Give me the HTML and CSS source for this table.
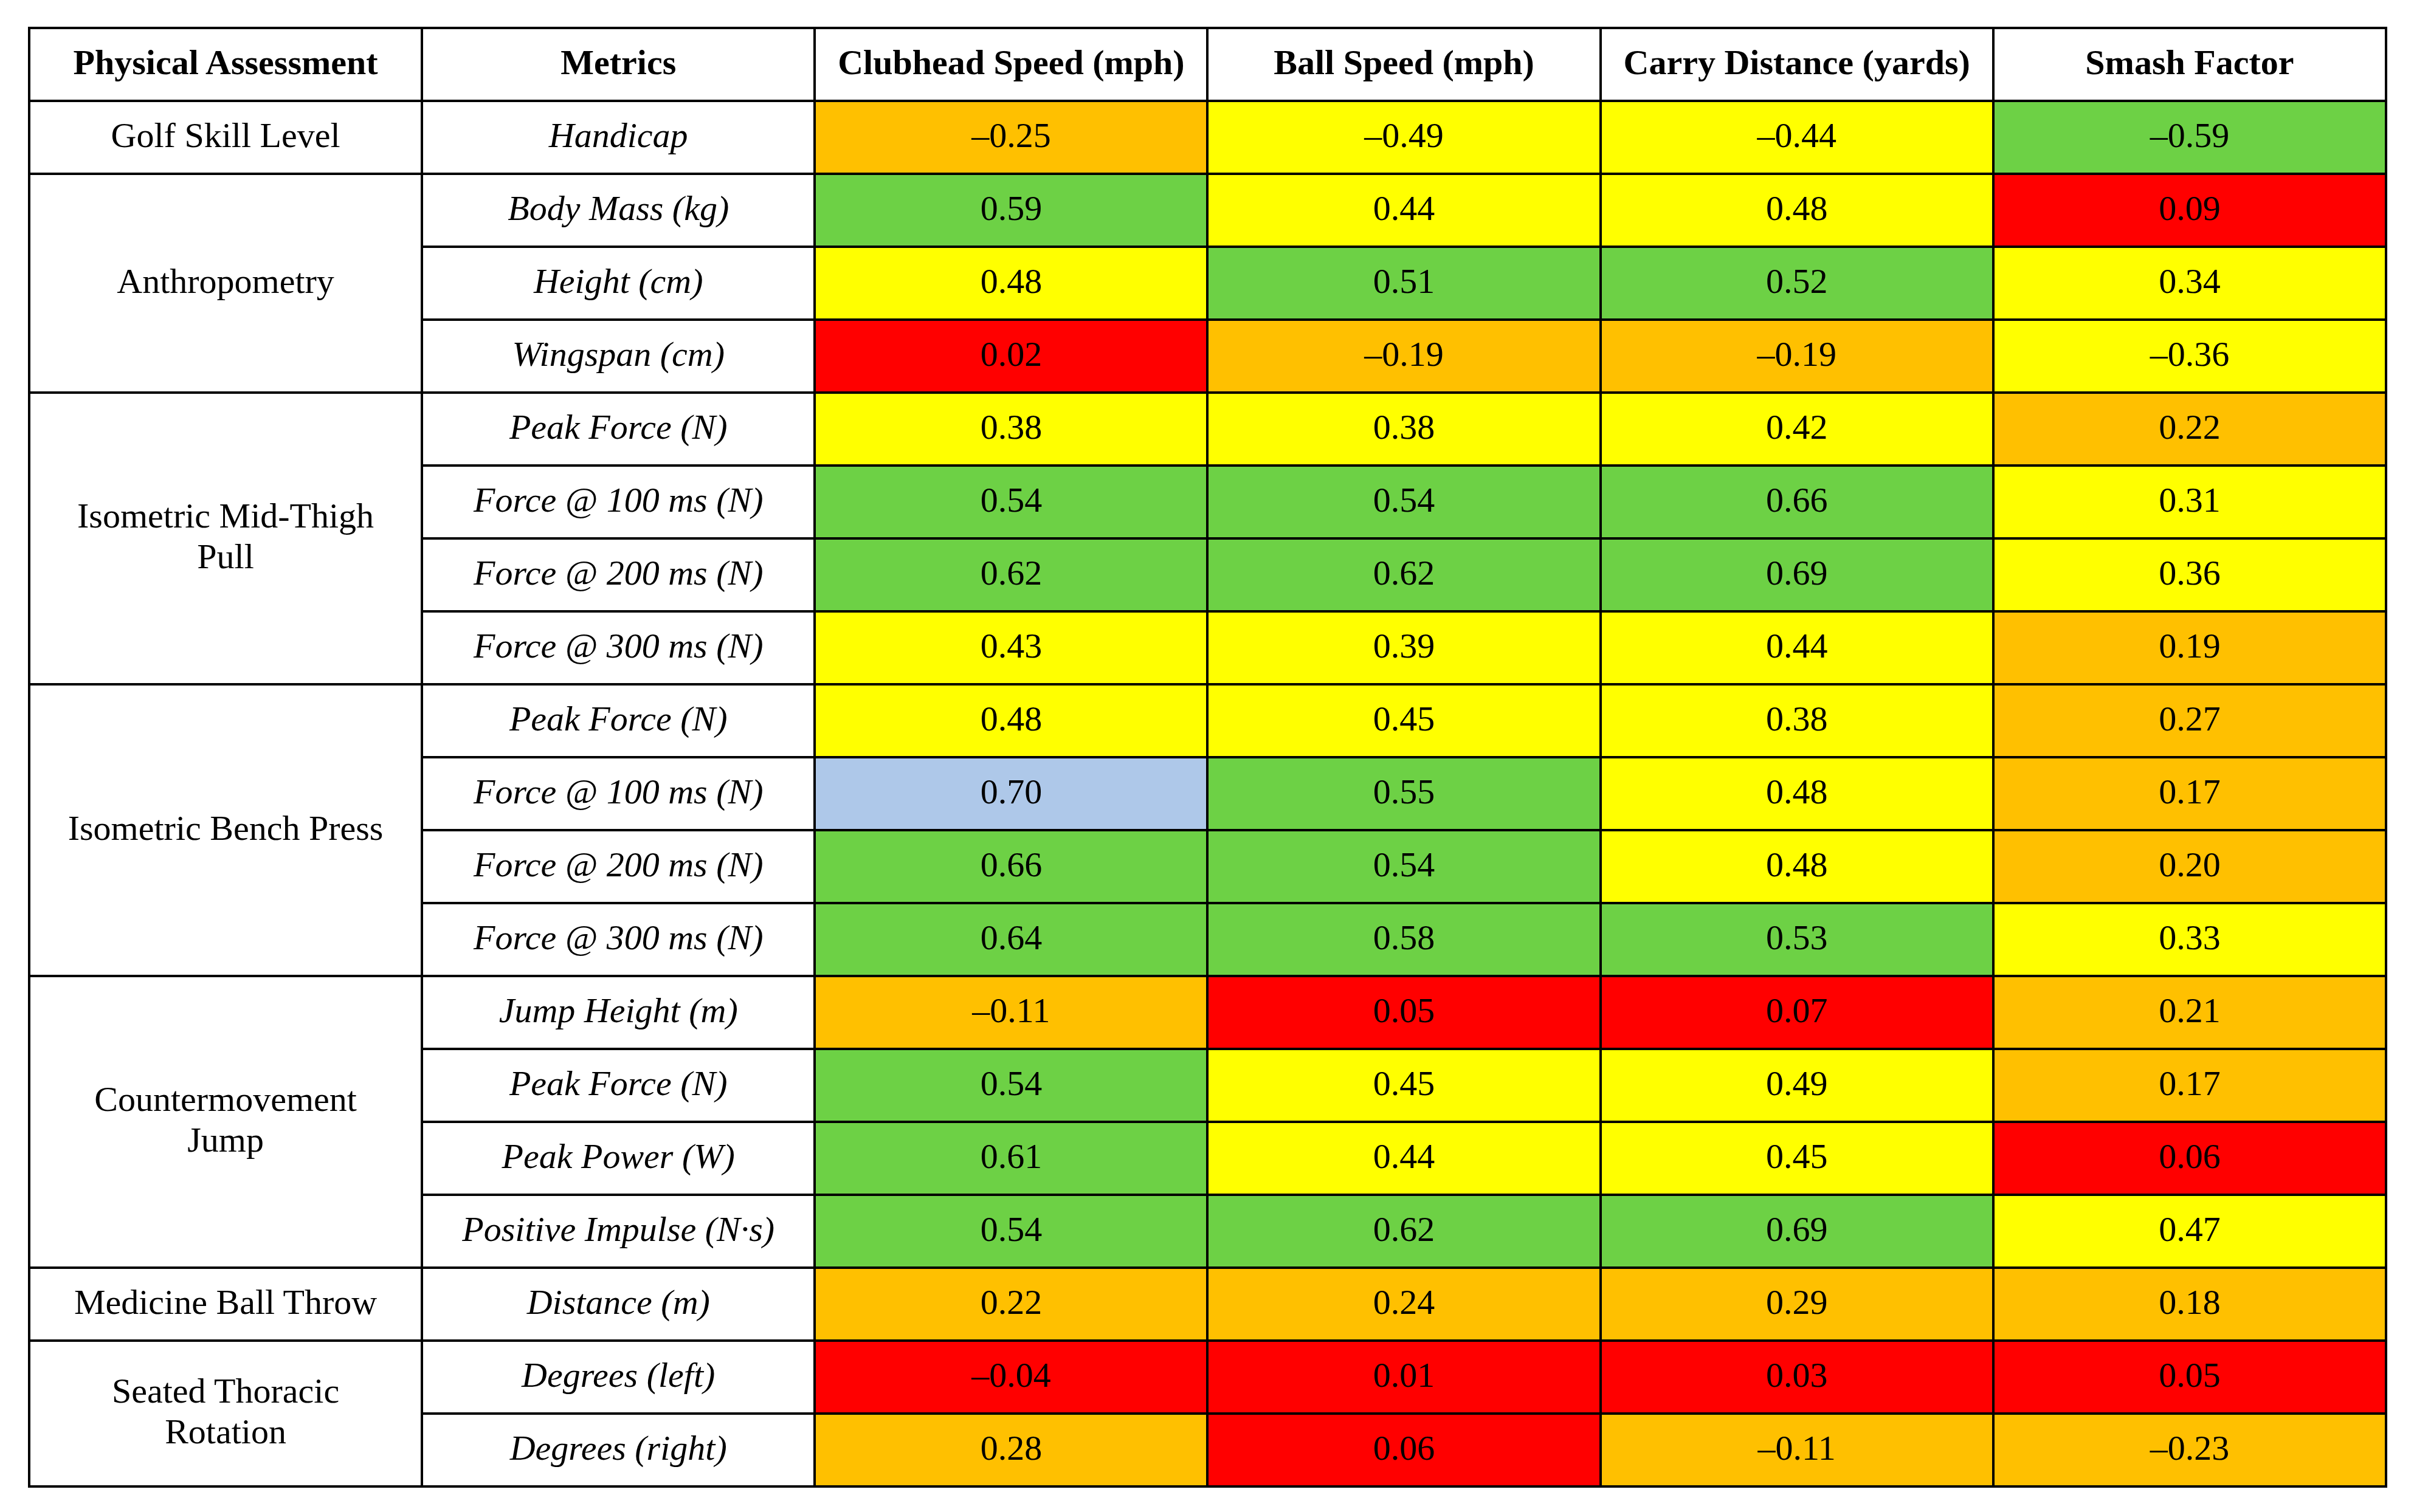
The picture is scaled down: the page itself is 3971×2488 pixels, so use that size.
FILE: index.html
```html
<!DOCTYPE html>
<html lang="en">
<head>
<meta charset="utf-8">
<title>Correlation table</title>
<link rel="stylesheet" href="styles.css">
</head>
<body>
<table class="grid">
  <thead>
    <tr>
      <th>Physical Assessment</th>
      <th>Metrics</th>
      <th>Clubhead Speed (mph)</th>
      <th>Ball Speed (mph)</th>
      <th>Carry Distance (yards)</th>
      <th>Smash Factor</th>
    </tr>
  </thead>
  <tbody>
    <tr>
      <td class="grp">Golf Skill Level</td>
      <td class="met">Handicap</td>
      <td class="o">–0.25</td><td class="y">–0.49</td><td class="y">–0.44</td><td class="g">–0.59</td>
    </tr>
    <tr>
      <td class="grp" rowspan="3">Anthropometry</td>
      <td class="met">Body Mass (kg)</td>
      <td class="g">0.59</td><td class="y">0.44</td><td class="y">0.48</td><td class="r">0.09</td>
    </tr>
    <tr>
      <td class="met">Height (cm)</td>
      <td class="y">0.48</td><td class="g">0.51</td><td class="g">0.52</td><td class="y">0.34</td>
    </tr>
    <tr>
      <td class="met">Wingspan (cm)</td>
      <td class="r">0.02</td><td class="o">–0.19</td><td class="o">–0.19</td><td class="y">–0.36</td>
    </tr>
    <tr>
      <td class="grp" rowspan="4">Isometric Mid-Thigh<br>Pull</td>
      <td class="met">Peak Force (N)</td>
      <td class="y">0.38</td><td class="y">0.38</td><td class="y">0.42</td><td class="o">0.22</td>
    </tr>
    <tr>
      <td class="met">Force @ 100 ms (N)</td>
      <td class="g">0.54</td><td class="g">0.54</td><td class="g">0.66</td><td class="y">0.31</td>
    </tr>
    <tr>
      <td class="met">Force @ 200 ms (N)</td>
      <td class="g">0.62</td><td class="g">0.62</td><td class="g">0.69</td><td class="y">0.36</td>
    </tr>
    <tr>
      <td class="met">Force @ 300 ms (N)</td>
      <td class="y">0.43</td><td class="y">0.39</td><td class="y">0.44</td><td class="o">0.19</td>
    </tr>
    <tr>
      <td class="grp" rowspan="4">Isometric Bench Press</td>
      <td class="met">Peak Force (N)</td>
      <td class="y">0.48</td><td class="y">0.45</td><td class="y">0.38</td><td class="o">0.27</td>
    </tr>
    <tr>
      <td class="met">Force @ 100 ms (N)</td>
      <td class="b">0.70</td><td class="g">0.55</td><td class="y">0.48</td><td class="o">0.17</td>
    </tr>
    <tr>
      <td class="met">Force @ 200 ms (N)</td>
      <td class="g">0.66</td><td class="g">0.54</td><td class="y">0.48</td><td class="o">0.20</td>
    </tr>
    <tr>
      <td class="met">Force @ 300 ms (N)</td>
      <td class="g">0.64</td><td class="g">0.58</td><td class="g">0.53</td><td class="y">0.33</td>
    </tr>
    <tr>
      <td class="grp" rowspan="4">Countermovement<br>Jump</td>
      <td class="met">Jump Height (m)</td>
      <td class="o">–0.11</td><td class="r">0.05</td><td class="r">0.07</td><td class="o">0.21</td>
    </tr>
    <tr>
      <td class="met">Peak Force (N)</td>
      <td class="g">0.54</td><td class="y">0.45</td><td class="y">0.49</td><td class="o">0.17</td>
    </tr>
    <tr>
      <td class="met">Peak Power (W)</td>
      <td class="g">0.61</td><td class="y">0.44</td><td class="y">0.45</td><td class="r">0.06</td>
    </tr>
    <tr>
      <td class="met">Positive Impulse (N·s)</td>
      <td class="g">0.54</td><td class="g">0.62</td><td class="g">0.69</td><td class="y">0.47</td>
    </tr>
    <tr>
      <td class="grp">Medicine Ball Throw</td>
      <td class="met">Distance (m)</td>
      <td class="o">0.22</td><td class="o">0.24</td><td class="o">0.29</td><td class="o">0.18</td>
    </tr>
    <tr>
      <td class="grp" rowspan="2">Seated Thoracic<br>Rotation</td>
      <td class="met">Degrees (left)</td>
      <td class="r">–0.04</td><td class="r">0.01</td><td class="r">0.03</td><td class="r">0.05</td>
    </tr>
    <tr>
      <td class="met">Degrees (right)</td>
      <td class="o">0.28</td><td class="r">0.06</td><td class="o">–0.11</td><td class="o">–0.23</td>
    </tr>
  </tbody>
</table>
</body>
</html>
```

FILE: styles.css
```css
html, body {
  margin: 0;
  padding: 0;
  background: #ffffff;
}

body {
  padding: 44px 0 0 46px;
  font-family: "Liberation Serif", "Times New Roman", serif;
  color: #000000;
}

.grid {
  border-collapse: collapse;
  table-layout: fixed;
  width: 3881px;
  font-size: 58px;
  line-height: 67px;
}

.grid th,
.grid td {
  border: 4px solid #000000;
  width: 646px;
  height: 120px;
  padding: 0 8px 8px;
  text-align: center;
  vertical-align: middle;
  box-sizing: border-box;
}

.grid th {
  font-weight: bold;
}

.grid td.met {
  font-style: italic;
}

.grid td.o { background: #ffc000; }
.grid td.y { background: #ffff00; }
.grid td.g { background: #6dd145; }
.grid td.r { background: #ff0000; }
.grid td.b { background: #aec8e9; }
```
